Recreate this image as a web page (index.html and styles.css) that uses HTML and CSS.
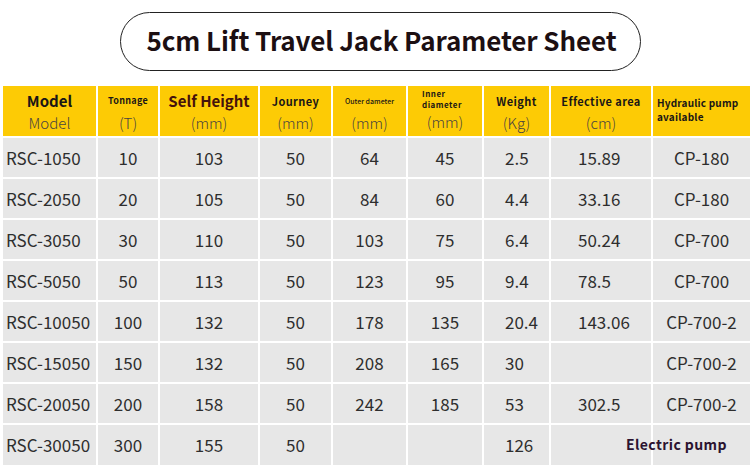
FILE: index.html
```html
<!DOCTYPE html>
<html>
<head>
<meta charset="utf-8">
<link rel="stylesheet" href="styles.css">
</head>
<body>
<div class="title-wrap">
  <div class="title">5cm Lift Travel Jack Parameter Sheet</div>
</div>
<table class="sheet">
  <colgroup>
    <col class="c1"><col class="c2"><col class="c3"><col class="c4"><col class="c5"><col class="c6"><col class="c7"><col class="c8"><col class="c9">
  </colgroup>
  <thead>
    <tr>
      <th><span class="h-main h-model">Model</span><span class="h-unit">Model</span></th>
      <th><span class="h-main h-tiny">Tonnage</span><span class="h-unit">(T)</span></th>
      <th><span class="h-main h-self">Self Height</span><span class="h-unit">(mm)</span></th>
      <th><span class="h-main h-mid">Journey</span><span class="h-unit">(mm)</span></th>
      <th><span class="h-main h-micro">Outer dameter</span><span class="h-unit">(mm)</span></th>
      <th class="th-inner"><span class="h-two">Inner<br>diameter</span><span class="h-unit">(mm)</span></th>
      <th><span class="h-main h-mid">Weight</span><span class="h-unit">(Kg)</span></th>
      <th><span class="h-main h-mid">Effective area</span><span class="h-unit">(cm)</span></th>
      <th class="th-pump"><span class="h-pump">Hydraulic pump<br>available</span></th>
    </tr>
  </thead>
  <tbody>
    <tr><td class="model">RSC-1050</td><td>10</td><td>103</td><td>50</td><td>64</td><td>45</td><td class="wt">2.5</td><td class="area">15.89</td><td>CP-180</td></tr>
    <tr><td class="model">RSC-2050</td><td>20</td><td>105</td><td>50</td><td>84</td><td>60</td><td class="wt">4.4</td><td class="area">33.16</td><td>CP-180</td></tr>
    <tr><td class="model">RSC-3050</td><td>30</td><td>110</td><td>50</td><td>103</td><td>75</td><td class="wt">6.4</td><td class="area">50.24</td><td>CP-700</td></tr>
    <tr><td class="model">RSC-5050</td><td>50</td><td>113</td><td>50</td><td>123</td><td>95</td><td class="wt">9.4</td><td class="area">78.5</td><td>CP-700</td></tr>
    <tr><td class="model">RSC-10050</td><td>100</td><td>132</td><td>50</td><td>178</td><td>135</td><td class="wt">20.4</td><td class="area">143.06</td><td>CP-700-2</td></tr>
    <tr><td class="model">RSC-15050</td><td>150</td><td>132</td><td>50</td><td>208</td><td>165</td><td class="wt">30</td><td class="area"></td><td>CP-700-2</td></tr>
    <tr><td class="model">RSC-20050</td><td>200</td><td>158</td><td>50</td><td>242</td><td>185</td><td class="wt">53</td><td class="area">302.5</td><td>CP-700-2</td></tr>
    <tr><td class="model">RSC-30050</td><td>300</td><td>155</td><td>50</td><td></td><td></td><td class="wt">126</td><td class="electric" colspan="2">Electric pump</td></tr>
  </tbody>
</table>
</body>
</html>
```

FILE: styles.css
```css
html, body {
  margin: 0;
  padding: 0;
  background: #ffffff;
}
body {
  width: 750px;
  height: 472px;
  overflow: hidden;
  font-family: "Noto Sans CJK SC", "Noto Sans", sans-serif;
}
.title-wrap {
  padding-top: 12px;
  padding-left: 120px;
}
.title {
  box-sizing: border-box;
  width: 521px;
  height: 59px;
  border: 1.5px solid #222;
  border-radius: 30px;
  display: flex;
  align-items: center;
  justify-content: center;
  font-size: 26px;
  font-weight: 700;
  color: #1c0f12;
  letter-spacing: -0.1px;
  padding-left: 2px;
  padding-bottom: 5px;
}
.sheet {
  margin-top: 15px;
  margin-left: 3px;
  width: 747px;
  table-layout: fixed;
  border-collapse: collapse;
}
.c1 { width: 94px; }
.c2 { width: 62px; }
.c3 { width: 100px; }
.c4 { width: 73px; }
.c5 { width: 75px; }
.c6 { width: 76px; }
.c7 { width: 67px; }
.c8 { width: 102px; }
.c9 { width: 98px; }
.sheet th, .sheet td {
  border: 2px solid #ffffff;
  padding: 0;
  overflow: visible;
  white-space: nowrap;
}
.sheet th:first-child, .sheet td:first-child { border-left: 0; }
.sheet th:last-child, .sheet td:last-child { border-right: 0; }
.sheet thead th { border-top: 0; }
.sheet tbody tr:last-child td { border-bottom: 0; }
.sheet thead tr { height: 51px; }
.sheet thead th {
  background: #fdcb05;
  text-align: center;
  vertical-align: top;
  font-weight: 700;
  color: #1a1616;
}
.h-main {
  display: flex;
  align-items: center;
  justify-content: center;
  height: 27px;
  padding-top: 1px;
}
.h-unit {
  display: block;
  font-size: 15px;
  font-weight: 300;
  color: #4a4440;
  line-height: 18px;
}
.h-model { font-size: 15px; }
.h-tiny { font-size: 9px; letter-spacing: 0.3px; }
.h-self { font-size: 15px; color: #45120c; }
.h-mid { font-size: 11px; letter-spacing: 0.4px; }
.h-micro { font-size: 7px; font-weight: 500; }
.h-two {
  display: block;
  height: 28px;
  padding-top: 2px;
  box-sizing: border-box;
  font-size: 8px;
  line-height: 11px;
  letter-spacing: 0.5px;
  text-align: left;
  padding-left: 14px;
}
.th-inner .h-unit { margin-top: -1px; }
.th-pump { text-align: left !important; }
.h-pump {
  display: block;
  padding-top: 10px;
  padding-left: 4px;
  font-size: 10px;
  line-height: 13.5px;
  letter-spacing: 0.2px;
}
.sheet tbody tr { height: 41px; }
.sheet tbody td {
  background: #e7e7e7;
  color: #2e2e2e;
  font-size: 17px;
  font-weight: 400;
  text-align: center;
  vertical-align: middle;
  padding-bottom: 1px;
}
.sheet tbody td.model {
  text-align: left;
  padding-left: 3px;
}
.sheet tbody td.wt {
  text-align: left;
  padding-left: 21px;
}
.sheet tbody td.area {
  text-align: left;
  padding-left: 27px;
}
.sheet tbody td.electric {
  text-align: left;
  padding-left: 75px;
  padding-bottom: 3px;
  font-size: 14px;
  font-weight: 700;
  color: #2b1330;
  letter-spacing: 0.4px;
  background: linear-gradient(to right, #e7e7e7 0, #e7e7e7 100px, #ffffff 100px, #ffffff 102px, #e7e7e7 102px);
}
```
